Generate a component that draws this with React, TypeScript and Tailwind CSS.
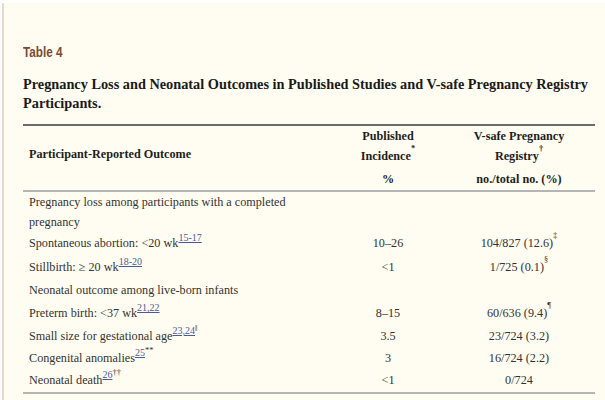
import React from "react";

const serif = { fontFamily: '"Liberation Serif", "Times New Roman", serif' };

function Ref({ children }: { children: React.ReactNode }) {
  return (
    <sup className="text-[10px] text-[#4b5b9a] underline relative top-[-1px] align-super leading-none">
      {children}
    </sup>
  );
}

function Mark({ children }: { children: React.ReactNode }) {
  return <sup className="text-[8.5px] leading-none align-super">{children}</sup>;
}

type Row = { label: React.ReactNode; pub?: React.ReactNode; reg?: React.ReactNode; h: string };

const rows: Row[] = [
  { label: "Pregnancy loss among participants with a completed", h: "h-[20px]" },
  { label: "pregnancy", h: "h-[20px]" },
  {
    label: (
      <>
        Spontaneous abortion: &lt;20 wk<Ref>15-17</Ref>
      </>
    ),
    pub: "10–26",
    reg: (
      <>
        104/827 (12.6)<Mark>‡</Mark>
      </>
    ),
    h: "h-[23px]",
  },
  {
    label: (
      <>
        Stillbirth: ≥ 20 wk<Ref>18-20</Ref>
      </>
    ),
    pub: "<1",
    reg: (
      <>
        1/725 (0.1)<Mark>§</Mark>
      </>
    ),
    h: "h-[24px]",
  },
  { label: "Neonatal outcome among live-born infants", h: "h-[23px]" },
  {
    label: (
      <>
        Preterm birth: &lt;37 wk<Ref>21,22</Ref>
      </>
    ),
    pub: "8–15",
    reg: (
      <>
        60/636 (9.4)<Mark>¶</Mark>
      </>
    ),
    h: "h-[23px]",
  },
  {
    label: (
      <>
        Small size for gestational age<Ref>23,24</Ref>
        <Mark>‖</Mark>
      </>
    ),
    pub: "3.5",
    reg: "23/724 (3.2)",
    h: "h-[22px]",
  },
  {
    label: (
      <>
        Congenital anomalies<Ref>25</Ref>
        <Mark>**</Mark>
      </>
    ),
    pub: "3",
    reg: "16/724 (2.2)",
    h: "h-[22px]",
  },
  {
    label: (
      <>
        Neonatal death<Ref>26</Ref>
        <Mark>††</Mark>
      </>
    ),
    pub: "<1",
    reg: "0/724",
    h: "h-[23px]",
  },
];

export default function App() {
  return (
    <div className="w-[605px] h-[400px] bg-white overflow-hidden">
      <div className="mt-[3px] ml-[2px] h-[397px] border-l-2 border-[#ecd5cc] bg-[#fffdf1]">
        <div className="pl-[19px] pr-[10px] pt-[40px]">
          <div
            className="text-[15px] font-bold text-[#7b4a36] leading-[18px] scale-x-[0.78] origin-left"
            style={{ fontFamily: '"Liberation Sans", Arial, sans-serif' }}
          >
            Table 4
          </div>
          <div className="mt-[14px] text-[14.3px] font-bold text-[#1a1a1a] leading-[19px]" style={serif}>
            Pregnancy Loss and Neonatal Outcomes in Published Studies and V-safe Pregnancy Registry
            <br />
            Participants.
          </div>
          <div className="mt-[11px] w-[572px] text-[12.2px] text-[#333]" style={serif}>
            <div className="border-t-2 border-[#6b6b6b]" />
            <div className="flex h-[66px] border-b-2 border-[#b5b5b5] font-bold text-[#1e1e1e]">
              <div className="w-[310px] pl-[6px] flex items-center pb-[7px]">Participant-Reported Outcome</div>
              <div className="w-[110px] flex flex-col items-center pt-[0px] leading-[20px]">
                <div>Published</div>
                <div>
                  Incidence<Mark>*</Mark>
                </div>
                <div className="mt-[3px]">%</div>
              </div>
              <div className="flex-1 flex flex-col items-center pt-[0px] leading-[20px]">
                <div>V-safe Pregnancy</div>
                <div>
                  Registry<Mark>†</Mark>
                </div>
                <div className="mt-[3px]">no./total no. (%)</div>
              </div>
            </div>
            <div className="border-b-2 border-[#b5b5b5]">
              {rows.map((r, i) => (
                <div key={i} className={`flex items-center ${r.h}`}>
                  <div className="w-[310px] pl-[6px] whitespace-nowrap">{r.label}</div>
                  <div className="w-[110px] text-center">{r.pub}</div>
                  <div className="flex-1 text-center">{r.reg}</div>
                </div>
              ))}
            </div>
          </div>
        </div>
      </div>
    </div>
  );
}
